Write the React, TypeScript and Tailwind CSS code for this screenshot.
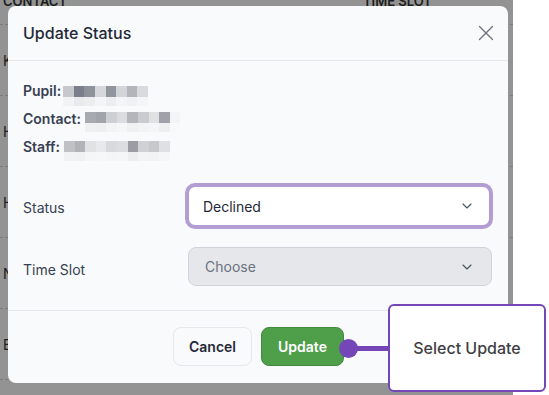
import { X, ChevronDown } from 'lucide-react'

const pupilBlocks = ['#c6c8cc', '#7b7f89', '#8e929a', '#d5d7db', '#91959d', '#d2d4d8', '#b3b5ba', '#d8dade']
const contactBlocks = ['#a7aab0', '#a1a4aa', '#cdd0d3', '#dadcdf', '#b3b6bb', '#c9cbcf', '#dfe1e3', '#9fa2a9', '#f3f4f5']
const staffBlocks = ['#bfc1c5', '#b1b3b8', '#e1e2e4', '#e8e9eb', '#d8d9dc', '#dcdde0', '#9a9da4', '#cfd1d4', '#c6c8cc', '#dfe0e3']

function Pixels({ colors }: { colors: string[] }) {
  return (
    <div className="flex flex-col">
      <div className="flex">
        {colors.map((c, i) => (
          <div key={i} className="w-[10.6px] h-[11px]" style={{ backgroundColor: c }} />
        ))}
      </div>
      <div className="flex">
        {colors.map((c, i) => (
          <div key={i} className="w-[10.6px] h-[9px]" style={{ backgroundColor: c, opacity: 0.12 }} />
        ))}
      </div>
    </div>
  )
}

const rows = ['K', 'H', 'H', 'N', 'E']

export default function App() {
  return (
    <div className="relative w-[549px] h-[395px] overflow-hidden bg-white font-['Inter',sans-serif]">
      {/* page behind the dialog, dimmed */}
      <div className="w-[513px] h-full bg-[#939393] text-[#1c1c1c]">
        <div className="flex items-start h-[25px] border-b border-dashed border-[#7c7c7c] text-[13px] font-semibold uppercase leading-[13px]">
          <span className="w-[363px] pl-[3px] -mt-[5px]">Contact</span>
          <span className="-mt-[5px]">Time Slot</span>
        </div>
        {rows.map((r, i) => (
          <div key={i} className="flex items-center h-[71px] pl-[3px] border-b border-dashed border-[#7c7c7c] text-[14px]">
            {r}
          </div>
        ))}
      </div>

      {/* dialog */}
      <div className="absolute left-[8px] top-[6px] w-[500px] h-[377px] flex flex-col rounded-lg bg-[#f9fafb]">
        <div className="flex items-center justify-between h-[55px] px-[15px] border-b border-[#e5e7eb]">
          <h2 className="text-[16px] font-medium text-[#1f2937]">Update Status</h2>
          <X className="w-[26px] h-[26px] text-[#6b7280] mr-[-6px]" strokeWidth={1.25} />
        </div>

        <div className="flex flex-col gap-[8px] px-[15px] pt-[20px] text-[14px] font-semibold text-[#374151]">
          <div className="flex items-start h-[20px]">
            <span className="leading-[20px]">Pupil:</span>
            <div className="mt-[5px] ml-[2px]"><Pixels colors={pupilBlocks} /></div>
          </div>
          <div className="flex items-start h-[20px]">
            <span className="leading-[20px]">Contact:</span>
            <div className="mt-[3px] ml-[4px]"><Pixels colors={contactBlocks} /></div>
          </div>
          <div className="flex items-start h-[20px]">
            <span className="leading-[20px]">Staff:</span>
            <div className="mt-[4px] ml-[4px]"><Pixels colors={staffBlocks} /></div>
          </div>
        </div>

        <div className="flex flex-col px-[15px] pt-[26px] text-[14px] text-[#374151]">
          <div className="flex items-center h-[46px]">
            <span className="w-[163px] pt-[2px]">Status</span>
            <div className="flex items-center justify-between w-[310px] h-[46px] px-[14px] rounded-[10px] border-[4px] border-[#b39ed3] bg-white">
              <span className="text-[#1f2937]">Declined</span>
              <ChevronDown className="w-[16px] h-[16px] text-[#4b5563]" strokeWidth={1.75} />
            </div>
          </div>
          <div className="flex items-center h-[39px] mt-[18px]">
            <span className="w-[165px] pt-[6px]">Time Slot</span>
            <div className="flex items-center justify-between w-[304px] h-[39px] pl-[16px] pr-[16px] rounded-lg border border-[#d1d5db] bg-[#e5e7eb]">
              <span className="text-[#6b7280]">Choose</span>
              <ChevronDown className="w-[16px] h-[16px] text-[#4b5563]" strokeWidth={1.75} />
            </div>
          </div>
        </div>

        <div className="mt-[24px] border-t border-[#e5e7eb] flex justify-end gap-[9px] pr-[164px] pt-[16px] text-[14px] font-semibold">
          <button className="w-[79px] h-[39px] rounded-lg border border-[#e5e7eb] bg-[#f9fafb] text-[#1f2937]">Cancel</button>
          <button className="w-[83px] h-[39px] rounded-lg border border-[#3f8a3c] bg-[#4e9e4a] text-white">Update</button>
        </div>
      </div>

      {/* tour callout */}
      <div className="absolute left-[339px] top-[304px] flex items-center h-[88px]">
        <div className="w-[19px] h-[19px] rounded-full bg-[#7446b8]" />
        <div className="w-[32px] h-[5px] -ml-[2px] bg-[#7446b8]" />
        <div className="flex items-center justify-center w-[158px] h-[88px] rounded-md border-2 border-[#7446b8] bg-white text-[16px] font-medium text-[#3f3f46]">
          Select Update
        </div>
      </div>
    </div>
  )
}
